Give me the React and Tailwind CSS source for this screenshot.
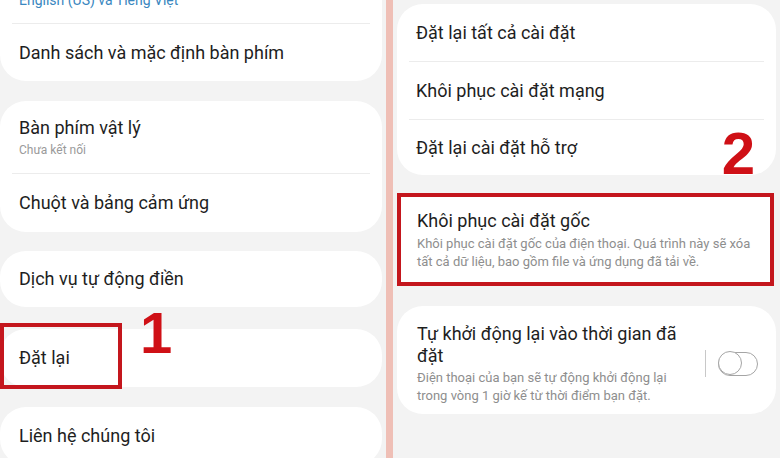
const font = { fontFamily: 'Roboto, "Noto Sans", sans-serif' }

function Row({ title, sub, h = 'h-[57px]' }) {
  return (
    <div className={`flex flex-col justify-center px-[19px] ${h}`}>
      <div className="text-[18px] leading-[24px] text-[#1e1e1e]">{title}</div>
      {sub && <div className="text-[12px] leading-[16px] text-[#9a9a9a] mt-[2px]">{sub}</div>}
    </div>
  )
}

function Divider() {
  return <div className="mx-[12px] h-px bg-[#ececec]" />
}

function Toggle() {
  return (
    <div className="flex items-center gap-[12px]">
      <div className="w-px h-[27px] bg-[#c8c8c8]" />
      <div className="relative w-[40px] h-[24px] rounded-full border-[1.5px] border-[#a5a5a5]">
        <div className="absolute -left-[1.5px] -top-[1.5px] w-[24px] h-[24px] rounded-full border-[1.5px] border-[#a5a5a5] bg-white" />
      </div>
    </div>
  )
}

export default function App() {
  return (
    <div className="w-[780px] h-[458px] overflow-hidden flex bg-[#f3f3f3]" style={font}>
      {/* Left screen */}
      <div className="w-[386px] flex flex-col gap-[20px] pr-[4px]">
        <div className="-mt-[40px] bg-white rounded-[26px]">
          <div className="h-[63px] flex items-end pb-[13px] px-[19px]">
            <div className="text-[14px] leading-[20px] text-[#3a87c0]">English (US) và Tiếng Việt</div>
          </div>
          <Divider />
          <Row title="Danh sách và mặc định bàn phím" />
        </div>

        <div className="bg-white rounded-[26px]">
          <Row title="Bàn phím vật lý" sub="Chưa kết nối" h="h-[72px]" />
          <Divider />
          <Row title="Chuột và bảng cảm ứng" h="h-[58px]" />
        </div>

        <div className="bg-white rounded-[26px] -mt-[1px]">
          <Row title="Dịch vụ tự động điền" h="h-[56px]" />
        </div>

        <div className="relative bg-white rounded-[26px] mt-[2px]">
          <Row title="Đặt lại" h="h-[58px]" />
          <div className="absolute left-0 -top-[6px] w-[122px] h-[66px] border-[4px] border-[#c4161d]" />
          <div
            className="absolute left-[140px] -top-[25px] text-[58px] leading-none font-bold text-[#cf1016]"
            style={{ fontFamily: '"Liberation Sans", Arial, sans-serif' }}
          >
            1
          </div>
        </div>

        <div className="bg-white rounded-[26px]">
          <Row title="Liên hệ chúng tôi" h="h-[58px]" />
        </div>
      </div>

      {/* Separator */}
      <div className="w-[7px] bg-[#efbfb6]" />

      {/* Right screen */}
      <div className="flex-1 flex flex-col gap-[20px] pt-[4px] pl-[4px] pr-[4px]">
        <div className="relative bg-white rounded-[26px]">
          <Row title="Đặt lại tất cả cài đặt" />
          <Divider />
          <Row title="Khôi phục cài đặt mạng" />
          <Divider />
          <Row title="Đặt lại cài đặt hỗ trợ" h="h-[55px]" />
          <div
            className="absolute right-[21px] top-[120px] text-[60px] leading-none font-bold text-[#cf1016]"
            style={{ fontFamily: '"Liberation Sans", Arial, sans-serif' }}
          >
            2
          </div>
        </div>

        <div className="bg-white border-[4px] border-[#c4161d] h-[93px] -mt-[2px] mr-[2px] flex flex-col justify-center px-[16px]">
          <div className="text-[18px] leading-[24px] text-[#1e1e1e]">Khôi phục cài đặt gốc</div>
          <div className="text-[13px] leading-[18px] text-[#8e8e8e] mt-[2px]">
            Khôi phục cài đặt gốc của điện thoại. Quá trình này sẽ xóa tất cả dữ liệu, bao gồm file và ứng dụng đã tải về.
          </div>
        </div>

        <div className="bg-white rounded-[26px] h-[108px] flex items-start pt-[17px] pl-[20px] pr-[18px]">
          <div className="w-[272px]">
            <div className="text-[18px] leading-[22px] text-[#1e1e1e]">Tự khởi động lại vào thời gian đã đặt</div>
            <div className="text-[13px] leading-[18px] text-[#8e8e8e] mt-[2px]">
              Điện thoại của bạn sẽ tự động khởi động lại trong vòng 1 giờ kế từ thời điểm bạn đặt.
            </div>
          </div>
          <div className="ml-auto mt-[27px]">
            <Toggle />
          </div>
        </div>
      </div>
    </div>
  )
}
